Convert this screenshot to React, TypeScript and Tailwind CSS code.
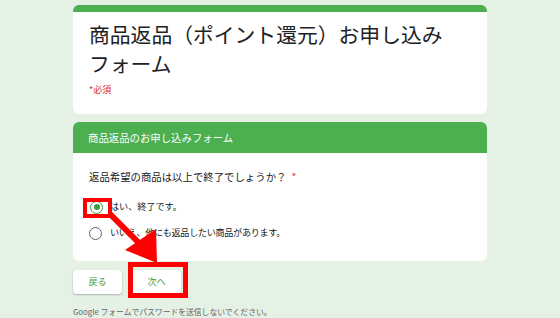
import React from "react";

const jp = { fontFamily: '"Noto Sans CJK JP", "Noto Sans", sans-serif' };

function Radio({ checked }: { checked?: boolean }) {
  return (
    <span
      className={
        "flex h-[13px] w-[13px] shrink-0 items-center justify-center rounded-full border-[1.5px] " +
        (checked ? "border-[#3d9a40]" : "border-[#5f6368]")
      }
    >
      {checked && <span className="h-[6px] w-[6px] rounded-full bg-[#3d9a40]" />}
    </span>
  );
}

export default function App() {
  return (
    <div className="relative min-h-[318px] w-[560px] overflow-hidden bg-[#e4f1e4] pt-[5px]" style={jp}>
      <div className="mx-auto w-[414px]">
        <div className="overflow-hidden rounded-[6px] border-t-[7px] border-[#4caf50] bg-white px-[16px] pb-[17px] pt-[8px]">
          <div className="text-[20.8px] leading-[29px] text-[#202124]">
            商品返品（ポイント還元）お申し込み
            <br />
            フォーム
          </div>
          <div className="mt-[5px] text-[9px] leading-[14px] text-[#d93025]">*必須</div>
        </div>

        <div className="mt-[8px] overflow-hidden rounded-[6px] bg-white">
          <div className="flex h-[31px] items-center bg-[#4caf50] px-[15px] text-[10.4px] text-white">
            商品返品のお申し込みフォーム
          </div>
          <div className="px-[16px] pb-[20px] pt-[16px]">
            <div className="flex items-center text-[10.4px] leading-[16px] text-[#202124]">
              返品希望の商品は以上で終了でしょうか？<span className="ml-[5px] text-[#d93025]">*</span>
            </div>
            <div className="mt-[14px] flex h-[16px] items-center gap-[7px] pl-[1px] text-[9.1px] text-[#202124]">
              <Radio checked />
              <span>はい、終了です。</span>
            </div>
            <div className="mt-[10px] flex h-[16px] items-center gap-[8px] text-[9.1px] text-[#202124]">
              <Radio />
              <span className="tracking-[-0.3px]">いいえ、他にも返品したい商品があります。</span>
            </div>
          </div>
        </div>

        <div className="mt-[9px] flex gap-[10px]">
          <div className="flex h-[24px] w-[49px] items-center justify-center rounded-[4px] bg-white text-[9.1px] text-[#3d9a40] shadow-[0_1px_2px_rgba(0,0,0,0.25)]">
            戻る
          </div>
          <div className="flex h-[24px] w-[49px] items-center justify-center rounded-[4px] bg-white text-[9.1px] text-[#3d9a40] shadow-[0_1px_2px_rgba(0,0,0,0.25)]">
            次へ
          </div>
        </div>

        <div className="mt-[12px] text-[7.8px] leading-[12px] text-[#5f6368]">
          Google フォームでパスワードを送信しないでください。
        </div>
      </div>

      <svg className="pointer-events-none absolute left-0 top-0" width="560" height="318" viewBox="0 0 560 318">
        <rect x="85" y="200" width="25" height="16" fill="none" stroke="#ff0000" strokeWidth="4" />
        <rect x="130.5" y="264.5" width="55" height="31" fill="none" stroke="#ff0000" strokeWidth="5" />
        <line x1="110" y1="214" x2="142" y2="246" stroke="#ff0000" strokeWidth="6" />
        <polygon points="125,250 156,229 157,263" fill="#ff0000" />
      </svg>
    </div>
  );
}
